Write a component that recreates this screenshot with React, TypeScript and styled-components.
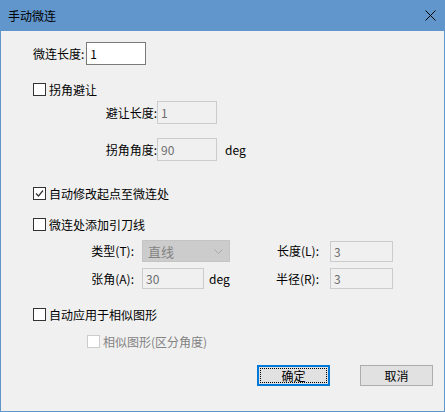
import React, { useState } from 'react';
import styled, { createGlobalStyle } from 'styled-components';

const GlobalStyle = createGlobalStyle`
  body {
    margin: 0;
    background: #ffffff;
    font-family: "Noto Sans CJK SC", "Liberation Sans", sans-serif;
    font-size: 12px;
    color: #000;
  }
`;

const Window = styled.div`
  width: 445px;
  height: 412px;
  box-sizing: border-box;
  border: 1px solid #6096cb;
  border-top: none;
  display: flex;
  flex-direction: column;
  background: #f0f0f0;
`;

const TitleBar = styled.div`
  height: 31px;
  margin: 0 -1px;
  background: #6096cb;
  display: flex;
  align-items: center;
  justify-content: space-between;
  padding: 0 9px 0 8px;
  flex-shrink: 0;
`;

const Title = styled.span`
  font-size: 12px;
  line-height: 14px;
  color: #000;
`;

const CloseButton = styled.span`
  width: 11px;
  height: 11px;
  display: flex;
  margin-top: -1px;
`;

const Body = styled.div`
  flex: 1;
  padding: 0 11px 0 32px;
  display: flex;
  flex-direction: column;
`;

const Row = styled.div<{ $top: number; $height: number; $indent?: number }>`
  display: flex;
  align-items: center;
  margin-top: ${({ $top }) => $top}px;
  height: ${({ $height }) => $height}px;
  padding-left: ${({ $indent }) => $indent || 0}px;
`;

const Label = styled.span<{ $width?: number }>`
  white-space: nowrap;
  line-height: 14px;
  ${({ $width }) => ($width ? `width: ${$width}px; text-align: right; flex-shrink: 0;` : '')}
`;

const TextBox = styled.input<{ $width: number; $height: number }>`
  box-sizing: border-box;
  width: ${({ $width }) => $width}px;
  height: ${({ $height }) => $height}px;
  margin: 0;
  padding: 0 0 0 3px;
  font-family: inherit;
  font-size: 12px;
  border: 1px solid #7a7a7a;
  background: #fff;
  color: #000;
  outline: none;

  &:disabled {
    border-color: #cccccc;
    background: #f0f0f0;
    color: #6d6d6d;
  }
`;

const Unit = styled.span<{ $gap: number }>`
  margin-left: ${({ $gap }) => $gap}px;
  line-height: 14px;
`;

const CheckLabel = styled.label<{ $disabled?: boolean }>`
  display: flex;
  align-items: center;
  gap: 3px;
  color: ${({ $disabled }) => ($disabled ? '#838383' : '#000')};
  line-height: 14px;
`;

const Box = styled.span<{ $disabled?: boolean }>`
  box-sizing: border-box;
  width: 13px;
  height: 13px;
  border: 1px solid ${({ $disabled }) => ($disabled ? '#cccccc' : '#333333')};
  background: #fff;
  display: flex;
  align-items: center;
  justify-content: center;
`;

const LeadGrid = styled.div`
  display: grid;
  grid-template-columns: 109px 88px 100px 63px;
  grid-template-rows: 22px 21px;
  row-gap: 6px;
  margin-top: 9px;
  align-items: center;
`;

const GridLabel = styled.span<{ $pad: number }>`
  text-align: right;
  padding-right: ${({ $pad }) => $pad}px;
  white-space: nowrap;
  line-height: 14px;
`;

const Cell = styled.div`
  display: flex;
  align-items: center;
`;

const Combo = styled.div`
  box-sizing: border-box;
  width: 89px;
  height: 22px;
  background: #cccccc;
  border: 1px solid #c4c4c4;
  display: flex;
  align-items: center;
  justify-content: space-between;
  padding: 0 6px 0 5px;
  color: #838383;
  font-size: 13px;
`;

const ButtonRow = styled.div`
  display: flex;
  justify-content: flex-end;
  gap: 30px;
  margin-top: 17px;
`;

const DialogButton = styled.button<{ $primary?: boolean }>`
  box-sizing: border-box;
  width: 73px;
  height: 21px;
  margin: 0;
  padding: 0;
  font-family: inherit;
  font-size: 12px;
  color: #000;
  background: #e1e1e1;
  border: ${({ $primary }) => ($primary ? '2px solid #0078d7' : '1px solid #adadad')};
  position: relative;
  display: flex;
  align-items: center;
  justify-content: center;

  ${({ $primary }) =>
    $primary
      ? `&::after {
    content: '';
    position: absolute;
    inset: 1px;
    border: 1px dotted #000;
  }`
      : ''}
`;

const Check = ({ checked, disabled, children, onToggle }: {
  checked?: boolean;
  disabled?: boolean;
  children: React.ReactNode;
  onToggle?: () => void;
}) => (
  <CheckLabel $disabled={disabled} onClick={disabled ? undefined : onToggle}>
    <Box $disabled={disabled}>
      {checked && (
        <svg width="9" height="9" viewBox="0 0 9 9">
          <path d="M1 4.5 L3.5 7 L8 1.5" stroke="#333" strokeWidth="1.2" fill="none" />
        </svg>
      )}
    </Box>
    {children}
  </CheckLabel>
);

export default function App() {
  const [avoid, setAvoid] = useState(false);
  const [autoStart, setAutoStart] = useState(true);
  const [leadIn, setLeadIn] = useState(false);
  const [similar, setSimilar] = useState(false);

  return (
    <>
      <GlobalStyle />
      <Window>
        <TitleBar>
          <Title>手动微连</Title>
          <CloseButton>
            <svg width="11" height="11" viewBox="0 0 11 11">
              <path d="M0.5 0.5 L10.5 10.5 M10.5 0.5 L0.5 10.5" stroke="#000" strokeWidth="1" fill="none" />
            </svg>
          </CloseButton>
        </TitleBar>
        <Body>
          <Row $top={11} $height={23}>
            <Label>微连长度:</Label>
            <TextBox $width={60} $height={23} defaultValue="1" style={{ marginLeft: 2 }} />
          </Row>

          <Row $top={18} $height={13}>
            <Check checked={avoid} onToggle={() => setAvoid(!avoid)}>拐角避让</Check>
          </Row>
          <Row $top={5} $height={23}>
            <Label $width={124}>避让长度:</Label>
            <TextBox $width={60} $height={23} defaultValue="1" disabled />
          </Row>
          <Row $top={14} $height={23}>
            <Label $width={124}>拐角角度:</Label>
            <TextBox $width={60} $height={23} defaultValue="90" disabled />
            <Unit $gap={8}>deg</Unit>
          </Row>

          <Row $top={26} $height={13}>
            <Check checked={autoStart} onToggle={() => setAutoStart(!autoStart)}>自动修改起点至微连处</Check>
          </Row>

          <Row $top={18} $height={13}>
            <Check checked={leadIn} onToggle={() => setLeadIn(!leadIn)}>微连处添加引刀线</Check>
          </Row>
          <LeadGrid>
            <GridLabel $pad={8}>类型(T):</GridLabel>
            <Cell>
              <Combo>
                直线
                <svg width="9" height="5" viewBox="0 0 9 5">
                  <path d="M0.5 0.5 L4.5 4.5 L8.5 0.5" stroke="#a8a8a8" strokeWidth="1" fill="none" />
                </svg>
              </Combo>
            </Cell>
            <GridLabel $pad={11}>长度(L):</GridLabel>
            <TextBox $width={63} $height={21} defaultValue="3" disabled />

            <GridLabel $pad={8}>张角(A):</GridLabel>
            <Cell>
              <TextBox $width={62} $height={21} defaultValue="30" disabled />
              <Unit $gap={5}>deg</Unit>
            </Cell>
            <GridLabel $pad={11}>半径(R):</GridLabel>
            <TextBox $width={63} $height={21} defaultValue="3" disabled />
          </LeadGrid>

          <Row $top={19} $height={13}>
            <Check checked={similar} onToggle={() => setSimilar(!similar)}>自动应用于相似图形</Check>
          </Row>
          <Row $top={14} $height={13} $indent={54}>
            <Check disabled>相似图形(区分角度)</Check>
          </Row>

          <ButtonRow>
            <DialogButton $primary>确定</DialogButton>
            <DialogButton>取消</DialogButton>
          </ButtonRow>
        </Body>
      </Window>
    </>
  );
}
